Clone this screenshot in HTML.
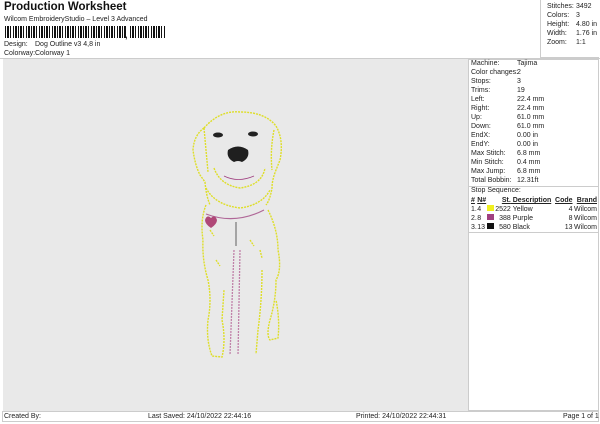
<!DOCTYPE html>
<html><head><meta charset="utf-8"><style>
*{margin:0;padding:0;box-sizing:border-box}
body{width:600px;height:424px;background:#fff;font-family:"Liberation Sans",Arial,sans-serif;color:#222;position:relative;overflow:hidden;font-size:7px}
.a{position:absolute;white-space:nowrap}
.bc{position:absolute;left:5px;top:26px;width:160px;height:12px;background:repeating-linear-gradient(90deg,#111 0 1px,#fff 1px 2px,#111 2px 4px,#fff 4px 5px,#111 5px 6px,#fff 6px 8px,#111 8px 9px,#fff 9px 10px,#111 10px 12px,#fff 12px 13px)}
td{font-size:7px;padding:0;line-height:9px;white-space:nowrap}
</style></head><body>
<div class="a" style="left:4px;top:1px;font-size:11.5px;font-weight:bold;color:#111">Production Worksheet</div>
<div class="a" style="left:4px;top:16px;font-size:7px">Wilcom EmbroideryStudio – Level 3 Advanced</div>
<div class="bc" style="width:122px"></div>
<div class="a" style="left:125px;top:30px;font-size:9px;font-weight:bold">,</div>
<div class="bc" style="left:130px;width:36px"></div>
<div class="a" style="left:4px;top:41px">Design:</div><div class="a" style="left:35px;top:41px">Dog Outline v3 4,8 in</div>
<div class="a" style="left:4px;top:50px">Colorway:</div><div class="a" style="left:35px;top:50px">Colorway 1</div>
<div style="position:absolute;left:540px;top:0;width:59px;height:58px;border-left:1px solid #ccc;border-bottom:1px solid #ccc"></div>
<div style="position:absolute;left:0;top:58px;width:600px;border-top:1px solid #ccc"></div>
<div class="a" style="left:547px;top:2px;line-height:9px">Stitches:<br>Colors:<br>Height:<br>Width:<br>Zoom:</div>
<div class="a" style="left:576px;top:2px;line-height:9px">3492<br>3<br>4.80 in<br>1.76 in<br>1:1</div>
<div style="position:absolute;left:3px;top:59px;width:465px;height:352px;background:#e9e9e9"></div>
<div style="position:absolute;left:468px;top:59px;width:131px;height:352px;border:1px solid #ccc"></div>
<div class="a" style="left:471px;top:59px;line-height:9px">Machine:<br>Color changes:<br>Stops:<br>Trims:<br>Left:<br>Right:<br>Up:<br>Down:<br>EndX:<br>EndY:<br>Max Stitch:<br>Min Stitch:<br>Max Jump:<br>Total Bobbin:</div>
<div class="a" style="left:517px;top:59px;line-height:9px">Tajima<br>2<br>3<br>19<br>22.4 mm<br>22.4 mm<br>61.0 mm<br>61.0 mm<br>0.00 in<br>0.00 in<br>6.8 mm<br>0.4 mm<br>6.8 mm<br>12.31ft</div>
<div style="position:absolute;left:469px;top:186px;width:129px;border-top:1px solid #ccc"></div>
<div class="a" style="left:471px;top:187px">Stop Sequence:</div>
<table style="position:absolute;left:471px;top:196px;width:126px;border-collapse:collapse">
<tr style="font-weight:bold;text-decoration:underline"><td>#</td><td>N#</td><td></td><td style="text-align:right">St.</td><td>&nbsp;Description</td><td style="text-align:right">Code</td><td style="text-align:right">Brand</td></tr>
<tr><td>1.</td><td>4</td><td><span style="display:inline-block;width:7px;height:6px;background:#f0f020"></span></td><td style="text-align:right">2522</td><td>&nbsp;Yellow</td><td style="text-align:right">4</td><td style="text-align:right">Wilcom</td></tr>
<tr><td>2.</td><td>8</td><td><span style="display:inline-block;width:7px;height:6px;background:#a04080"></span></td><td style="text-align:right">388</td><td>&nbsp;Purple</td><td style="text-align:right">8</td><td style="text-align:right">Wilcom</td></tr>
<tr><td>3.</td><td>13</td><td><span style="display:inline-block;width:7px;height:6px;background:#111"></span></td><td style="text-align:right">580</td><td>&nbsp;Black</td><td style="text-align:right">13</td><td style="text-align:right">Wilcom</td></tr>
</table>
<div style="position:absolute;left:469px;top:232px;width:129px;border-top:1px solid #ccc"></div>
<div style="position:absolute;left:2px;top:411px;width:597px;height:11px;border:1px solid #ccc"></div>
<div class="a" style="left:4px;top:413px">Created By:</div>
<div class="a" style="left:148px;top:413px">Last Saved: 24/10/2022 22:44:16</div>
<div class="a" style="left:356px;top:413px">Printed: 24/10/2022 22:44:31</div>
<div class="a" style="left:563px;top:413px">Page 1 of 1</div>
<svg style="position:absolute;left:0;top:0" width="600" height="424">
<g fill="none" stroke="#dede28" stroke-width="1.4" stroke-dasharray="2 1">
<path d="M204 128 Q220 110 240 112 Q265 112 276 126 Q284 140 280 160 L276 170 Q272 180 272 188 Q270 200 266 205"/>
<path d="M204 128 Q194 135 193 150 Q195 165 200 175 L205 182 Q206 195 210 205"/>
<path d="M204 128 Q206 150 208 172"/>
<path d="M274 130 Q270 150 272 170"/>
<path d="M214 168 Q220 185 240 188 Q262 185 265 168"/>
<path d="M206 188 Q215 205 240 208 Q262 205 270 190"/>
<path d="M206 205 Q200 220 203 240 Q202 260 208 280 Q212 300 208 320 Q206 340 212 356 L222 357 Q226 340 222 320 L224 290"/>
<path d="M268 210 Q278 230 278 250 Q282 270 276 280 Q276 300 270 320 Q266 335 270 340 L278 338 Q280 320 276 300"/>
<path d="M262 270 Q262 300 258 330 L256 354"/>
<path d="M210 230 L214 236 M216 260 L220 266 M250 240 L254 246 M260 250 L262 258"/>
</g>
<path d="M206 214 Q235 225 264 210" fill="none" stroke="#b06898" stroke-width="1.2"/>
<path d="M224 176 Q238 183 254 176" fill="none" stroke="#a04080" stroke-width="0.8"/>
<path d="M234 250 L230 355 M240 250 L238 355" fill="none" stroke="#c080a8" stroke-width="1.3" stroke-dasharray="2 1"/>
<path d="M211 218 q-4 -4 -6 2 q0 4 6 8 q6 -4 6 -8 q-2 -6 -6 -2z" fill="#b04878"/>
<path d="M236 222 L236 246" stroke="#777" stroke-width="1.2"/>
<ellipse cx="218" cy="135" rx="5" ry="2.5" fill="#222"/>
<ellipse cx="253" cy="134" rx="5" ry="2.5" fill="#222"/>
<path d="M228 150 Q238 143 248 150 Q250 158 242 162 Q238 160 234 162 Q226 158 228 150z" fill="#1f1f1f"/>
</svg>
</body></html>
